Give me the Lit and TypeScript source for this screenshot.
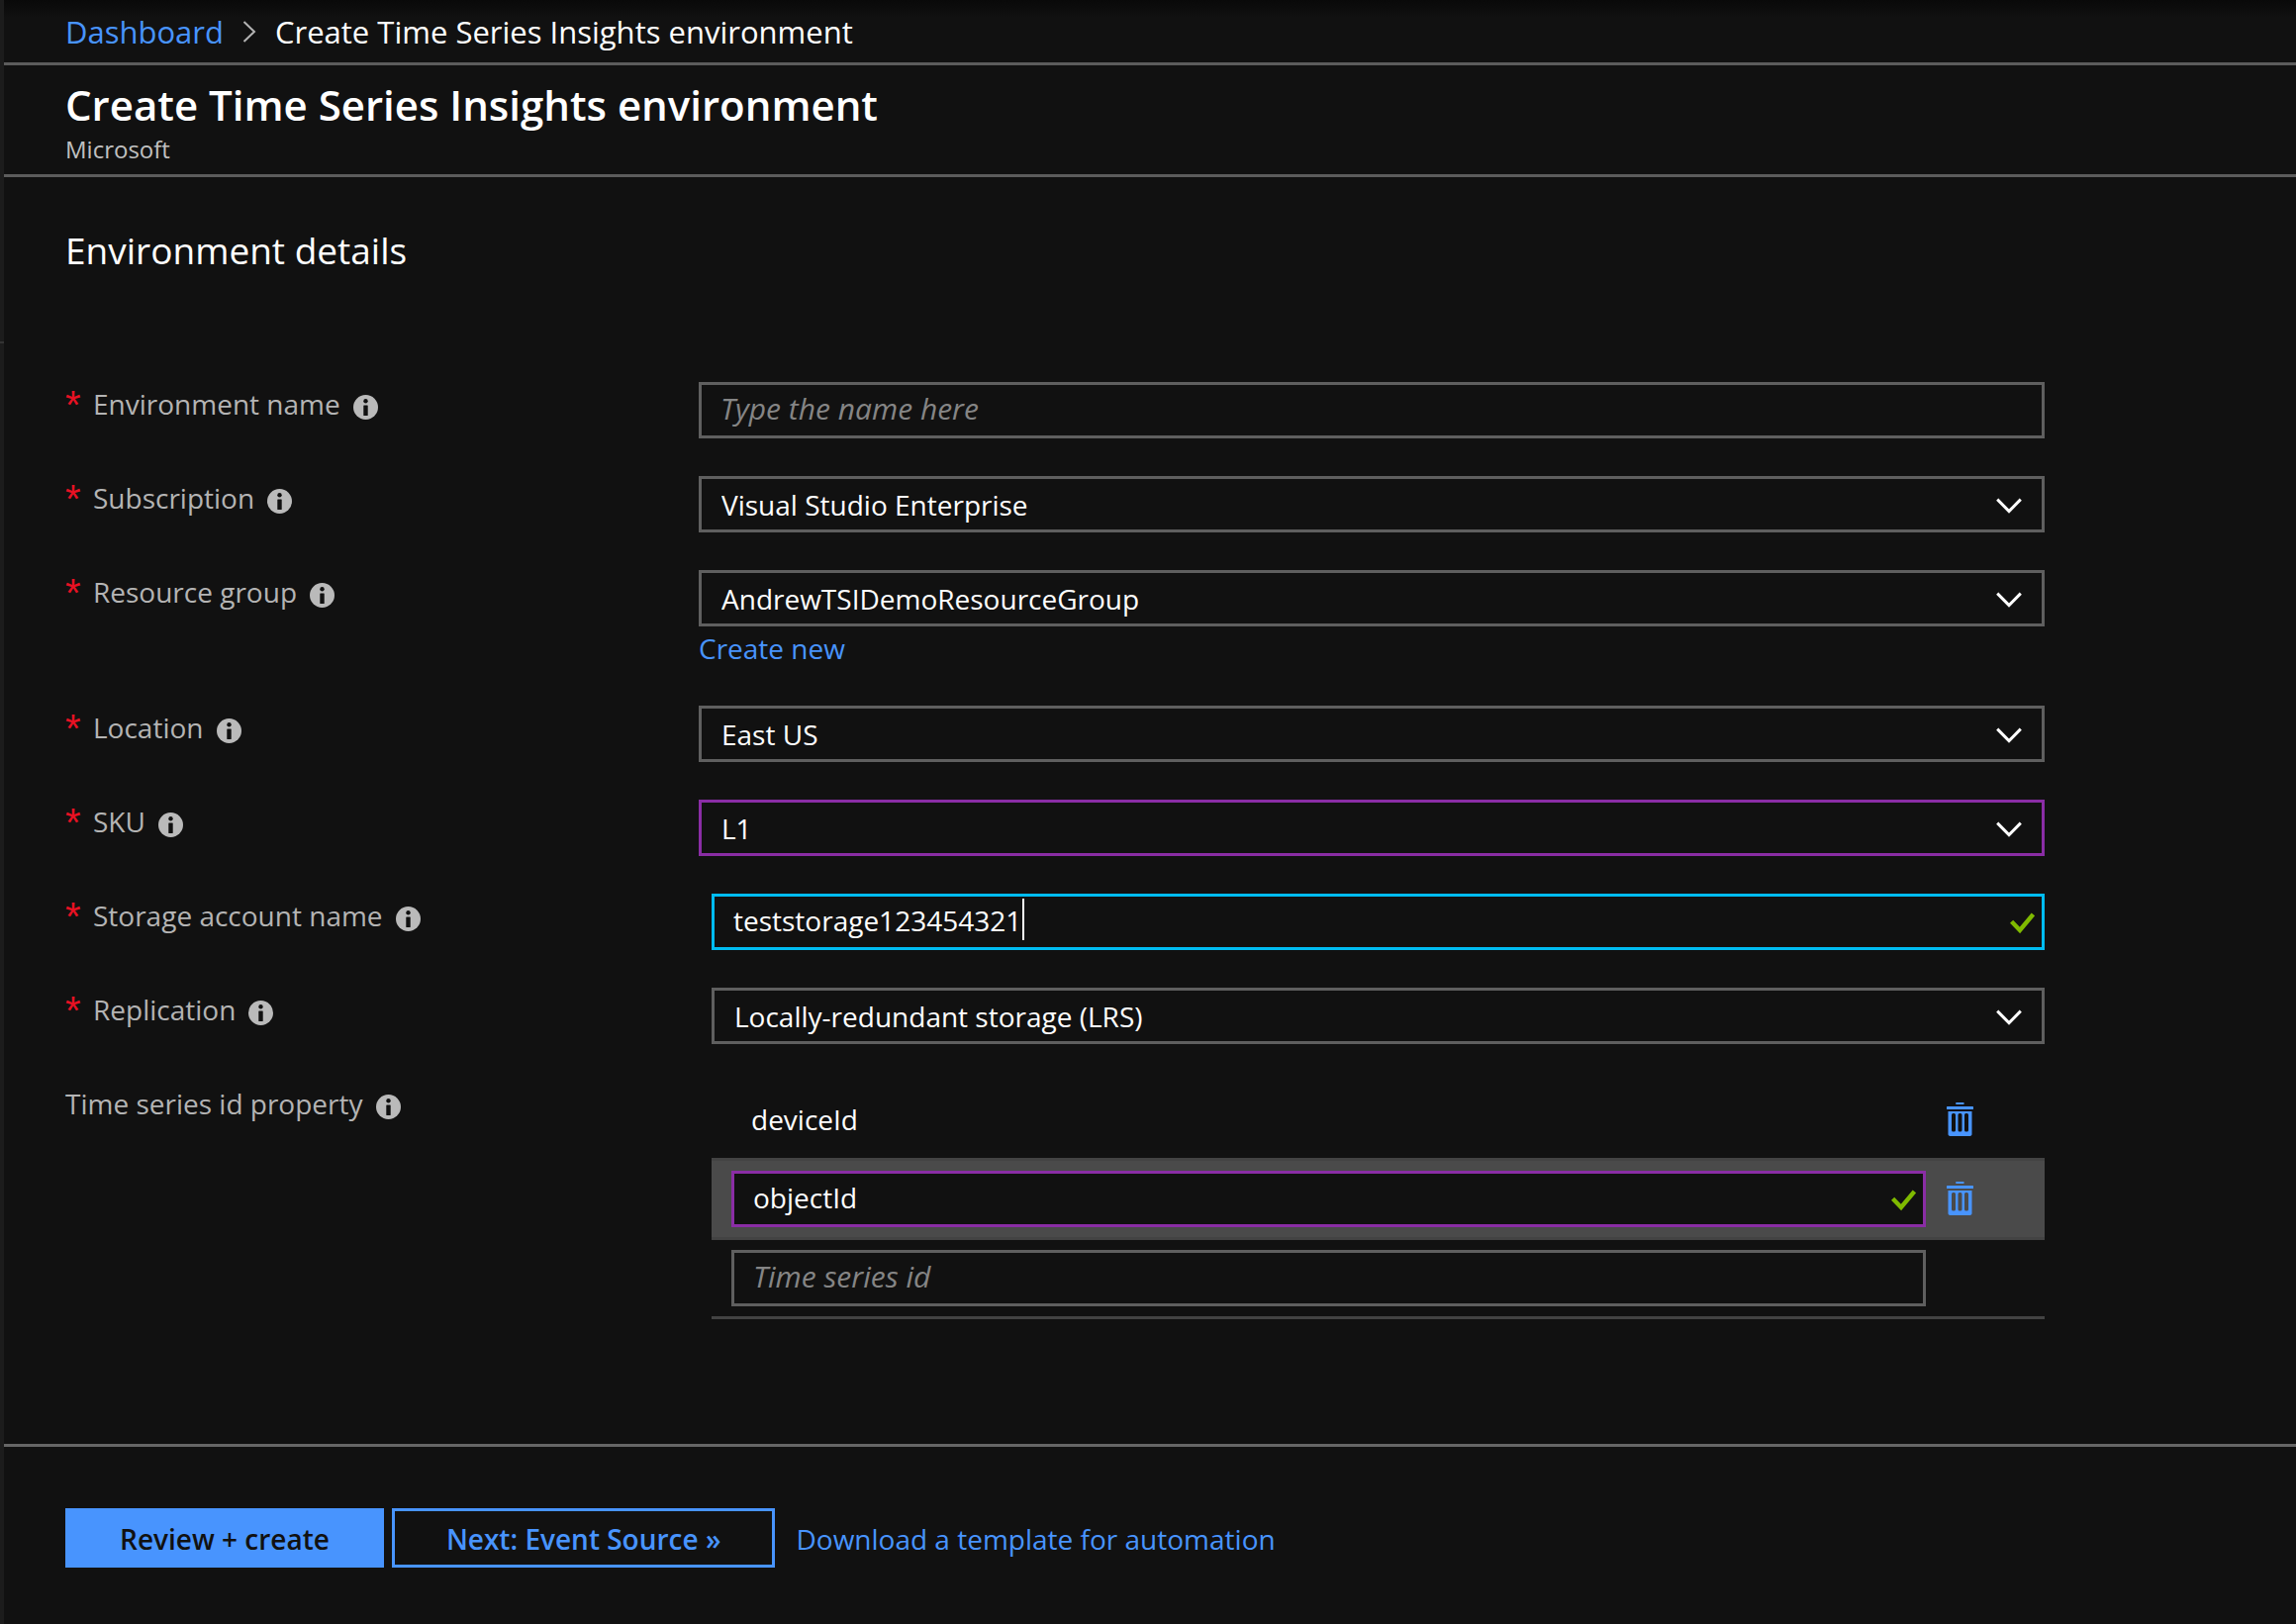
import { LitElement, html, css, nothing } from "lit";
import { customElement, property, state } from "lit/decorators.js";
import { classMap } from "lit/directives/class-map.js";

const infoIcon = html`<svg class="info" viewBox="0 0 25 25" aria-hidden="true">
  <circle cx="12.5" cy="12.5" r="12.5" fill="#bababa" />
  <circle cx="12.5" cy="6.3" r="2.2" fill="#111" />
  <rect x="10.3" y="10.5" width="4.4" height="10.5" rx="0.6" fill="#111" />
</svg>`;

const chevronDown = html`<svg class="chevron" viewBox="0 0 26 16" aria-hidden="true">
  <path d="M1.2 1.6 13 13.6 24.8 1.6" fill="none" stroke="#fff" stroke-width="3" />
</svg>`;

const checkIcon = html`<svg class="check" viewBox="0 0 25 22" aria-hidden="true">
  <path d="M1.6 9.2 10 18 23.4 2" fill="none" stroke="#7fba00" stroke-width="4.4" />
</svg>`;

const trashIcon = html`<svg class="trash" viewBox="0 0 27 34" aria-hidden="true">
  <g fill="#4894fe">
    <rect x="9.3" y="0" width="8.2" height="2" />
    <rect x="0" y="4" width="27" height="3" rx="0.5" />
    <path
      fill-rule="evenodd"
      d="M1.5 9H25.5V32Q25.5 34 22.5 34H4.5Q1.5 34 1.5 32ZM6.5 11Q5 11 5 12.5V28Q5 29.5 6.5 29.5H7.5Q9 29.5 9 28V12.5Q9 11 7.5 11ZM13 11Q11.5 11 11.5 12.5V28Q11.5 29.5 13 29.5H14Q15.5 29.5 15.5 28V12.5Q15.5 11 14 11ZM19.5 11Q18 11 18 12.5V28Q18 29.5 19.5 29.5H20.5Q22 29.5 22 28V12.5Q22 11 20.5 11Z"
    />
  </g>
</svg>`;

const controls = css`
  * {
    box-sizing: border-box;
  }
  input,
  select,
  button {
    font: inherit;
    color: inherit;
    margin: 0;
  }
  .box {
    display: grid;
    align-items: center;
    height: 57px;
    border: 3px solid #5f5f5f;
    background: #111;
  }
  .box.changed {
    border-color: #8a2da5;
  }
  .box.focused {
    border-color: #00bcf2;
  }
  .box > * {
    grid-area: 1 / 1;
  }
  .text {
    display: flex;
    align-items: center;
    padding-right: 7px;
    min-width: 0;
    height: 100%;
  }
  input,
  select {
    border: 0;
    outline: 0;
    border-radius: 0;
    background: transparent;
    appearance: none;
    height: 100%;
    padding: 0 0 0 20px;
    min-width: 0;
    color: #fff;
  }
  input {
    padding: 0 0 3px 19px;
  }
  .text input {
    flex: 1;
  }
  .focused input {
    flex: none;
    field-sizing: content;
  }
  input::placeholder {
    color: #858585;
    font-size: 30px;
    font-style: italic;
    opacity: 1;
  }
  select {
    width: 100%;
  }
  option {
    background: #111;
  }
  .caret {
    flex: none;
    width: 2px;
    height: 42px;
    margin-left: 1px;
    margin-bottom: 5px;
    background: #fff;
  }
  svg {
    display: block;
    flex: none;
  }
  .chevron {
    width: 26px;
    height: 16px;
    justify-self: end;
    margin: 2px 20px 0 0;
    pointer-events: none;
  }
  .check {
    width: 25px;
    height: 22px;
    margin: 2px 0 0 auto;
  }
`;

interface Field {
  id: string;
  label: string;
  kind: "text" | "select";
  value?: string;
  placeholder?: string;
  link?: string;
  inset?: boolean;
  changed?: boolean;
  focused?: boolean;
}

@customElement("form-label")
class FormLabel extends LitElement {
  @property() text = "";
  @property({ type: Boolean }) required = false;

  static styles = css`
    :host {
      display: flex;
      height: 46px;
      line-height: 44px;
      color: #b4b4b4;
    }
    .star {
      width: 28px;
      color: #e81123;
      font-family: "Liberation Sans", sans-serif;
      font-size: 40px;
      line-height: 46px;
    }
    .info {
      width: 25px;
      height: 25px;
      margin: 13px 0 0 13px;
    }
  `;

  render() {
    return html`${this.required ? html`<span class="star">*</span>` : nothing}
      <span>${this.text}</span>${infoIcon}`;
  }
}

@customElement("id-list")
class IdList extends LitElement {
  @state() private ids = [
    { value: "deviceId", editing: false },
    { value: "objectId", editing: true },
  ];

  static styles = [
    controls,
    css`
      ul {
        margin: 0;
        padding: 0;
        list-style: none;
      }
      li {
        display: grid;
        grid-template-columns: minmax(0, 1fr) 120px;
        align-items: center;
        min-height: 80px;
        padding: 10px 0 10px 20px;
        border-bottom: 3px solid #434343;
      }
      li.selected {
        background: #4a4a4a;
      }
      .name {
        padding: 0 0 2px 20px;
        color: #fff;
      }
      button {
        justify-self: start;
        margin-left: 21px;
        padding: 0 0 2px;
        border: 0;
        background: none;
      }
      .trash {
        width: 27px;
        height: 34px;
      }
    `,
  ];

  render() {
    return html`<ul>
      ${this.ids.map(
        (id) => html`<li class=${classMap({ selected: id.editing })}>
          ${id.editing
            ? html`<div class="box changed">
                <div class="text">
                  <input type="text" aria-label="Time series id" .value=${id.value} />${checkIcon}
                </div>
              </div>`
            : html`<span class="name">${id.value}</span>`}
          <button type="button" aria-label="Delete ${id.value}">${trashIcon}</button>
        </li>`
      )}
      <li>
        <div class="box">
          <div class="text">
            <input type="text" aria-label="New time series id" placeholder="Time series id" />
          </div>
        </div>
      </li>
    </ul>`;
  }
}

@customElement("app-root")
class AppRoot extends LitElement {
  private fields: Field[] = [
    { id: "name", label: "Environment name", kind: "text", placeholder: "Type the name here" },
    { id: "subscription", label: "Subscription", kind: "select", value: "Visual Studio Enterprise" },
    {
      id: "group",
      label: "Resource group",
      kind: "select",
      value: "AndrewTSIDemoResourceGroup",
      link: "Create new",
    },
    { id: "location", label: "Location", kind: "select", value: "East US" },
    { id: "sku", label: "SKU", kind: "select", value: "L1", changed: true },
    {
      id: "storage",
      label: "Storage account name",
      kind: "text",
      value: "teststorage123454321",
      inset: true,
      focused: true,
    },
    {
      id: "replication",
      label: "Replication",
      kind: "select",
      value: "Locally-redundant storage (LRS)",
      inset: true,
    },
  ];

  static styles = [
    controls,
    css`
      :host {
        display: flex;
        flex-direction: column;
        min-height: 100vh;
        box-sizing: border-box;
        padding-left: 4px;
        background:
          linear-gradient(#333, #333) 0 345px / 4px 2px no-repeat,
          linear-gradient(#1c1c1c, #1c1c1c) 0 0 / 4px 100% no-repeat,
          linear-gradient(#090909, #111 18px);
        color: #fff;
        font-family: "Open Sans", "Noto Sans", sans-serif;
        font-size: 28px;
        line-height: 40px;
      }
      a {
        color: #4894fe;
        text-decoration: none;
      }
      nav {
        display: flex;
        align-items: center;
        height: 66px;
        padding: 0 62px;
        border-bottom: 3px solid #5c5c5c;
        font-size: 31px;
      }
      .sep {
        width: 14px;
        height: 22px;
        margin: 0 19px;
      }
      header {
        padding: 12px 62px 10px;
        border-bottom: 3px solid #5c5c5c;
      }
      h1,
      h2,
      p {
        margin: 0;
      }
      h1 {
        font-size: 42px;
        line-height: 56px;
        font-weight: 600;
      }
      header p {
        padding-top: 2px;
        font-size: 24px;
        line-height: 30px;
        color: #c0c0c0;
      }
      main {
        flex: 1;
        padding: 49px 62px 126px;
      }
      h2 {
        font-size: 37px;
        line-height: 50px;
        font-weight: 400;
        margin-bottom: 108px;
      }
      form {
        display: grid;
        gap: 38px;
        max-width: 2000px;
      }
      .row {
        display: grid;
        grid-template-columns: 640px minmax(0, 1fr);
      }
      .inset {
        margin-left: 13px;
      }
      .create {
        display: block;
        height: 42px;
        line-height: 44px;
      }
      footer {
        display: flex;
        align-items: center;
        padding: 62px 62px 57px;
        border-top: 3px solid #666;
      }
      button {
        height: 60px;
        padding: 2px 52px 0;
        border: 3px solid #4894fe;
        background: transparent;
        color: #4894fe;
        margin-right: 8px;
        font-weight: 600;
      }
      button.primary {
        background: #4894fe;
        color: #111;
      }
      footer a {
        padding-top: 2px;
        margin-left: 13px;
      }
    `,
  ];

  private renderField(f: Field) {
    const box = classMap({ box: true, changed: !!f.changed, focused: !!f.focused });
    return html`<div class="row">
      <label for=${f.id}><form-label .text=${f.label} required></form-label></label>
      <div class=${classMap({ inset: !!f.inset })}>
        <div class=${box}>
          ${f.kind === "select"
            ? html`<select id=${f.id}>
                  <option>${f.value}</option>
                </select>
                ${chevronDown}`
            : html`<div class="text">
                <input
                  id=${f.id}
                  type="text"
                  .value=${f.value ?? ""}
                  placeholder=${f.placeholder ?? ""}
                />${f.focused ? html`<span class="caret"></span>${checkIcon}` : nothing}
              </div>`}
        </div>
        ${f.link ? html`<a class="create" href="#new">${f.link}</a>` : nothing}
      </div>
    </div>`;
  }

  render() {
    return html`
      <nav aria-label="Breadcrumb">
        <a href="#dashboard">Dashboard</a>
        <svg class="sep" viewBox="0 0 14 22" aria-hidden="true">
          <path d="M1.5 1 12 11 1.5 21" fill="none" stroke="#b4b4b4" stroke-width="2" />
        </svg>
        <span>Create Time Series Insights environment</span>
      </nav>
      <header>
        <h1>Create Time Series Insights environment</h1>
        <p>Microsoft</p>
      </header>
      <main>
        <h2>Environment details</h2>
        <form>
          ${this.fields.map((f) => this.renderField(f))}
          <div class="row">
            <form-label text="Time series id property"></form-label>
            <id-list class="inset"></id-list>
          </div>
        </form>
      </main>
      <footer>
        <button type="button" class="primary">Review + create</button>
        <button type="button">Next: Event Source »</button>
        <a href="#template">Download a template for automation</a>
      </footer>
    `;
  }
}
